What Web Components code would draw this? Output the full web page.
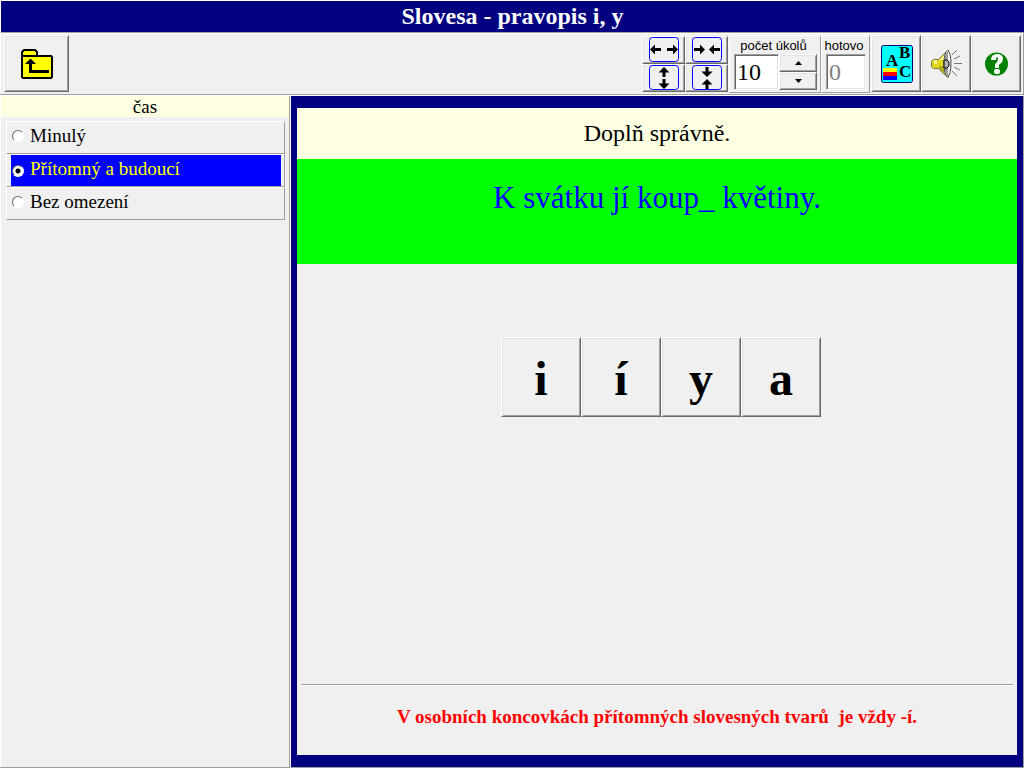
<!DOCTYPE html>
<html lang="cs">
<head>
<meta charset="utf-8">
<title>Slovesa - pravopis i, y</title>
<style>
html, body { height: 100%; margin: 0; }
body { background: #f0f0f0; color: #000; font-family: "Liberation Serif", "Times New Roman", serif; }
</style>
</head>
<body>
<exercise-app></exercise-app>
<script>
const define = (name, html, setup) => {
  const template = document.createElement('template');
  template.innerHTML = '<style>*{box-sizing:border-box}:host{box-sizing:border-box}</style>' + html;
  customElements.define(name, class extends HTMLElement {
    constructor() {
      super();
      this.attachShadow({ mode: 'open' }).append(template.content.cloneNode(true));
    }
    connectedCallback() { if (setup) setup(this, this.shadowRoot); }
  });
};

/* Raised push button with a two-step bevel */
define('bevel-button', `
<style>
:host { display: block; }
button { display: flex; align-items: center; justify-content: center; width: 100%; height: 100%; margin: 0; padding: var(--button-padding, 0);
  background: #f0f0f0; color: inherit; font: inherit; border: 1px solid; border-color: #fff #696969 #696969 #fff;
  box-shadow: inset 1px 1px #e3e3e3, inset -1px -1px #a0a0a0; cursor: default; }
</style>
<button type="button"><slot></slot></button>`, (host, root) => {
  const label = host.getAttribute('label');
  if (label) root.querySelector('button').setAttribute('aria-label', label);
});

define('title-bar', `
<style>
:host { display: block; background: #000080; color: #fff; border: 1px solid #fff; border-width: 1px 0 0 1px; border-bottom: 1px solid #a0a0a0; }
h1 { margin: 0; font-size: 24px; line-height: 31px; text-align: center; font-weight: bold; }
</style>
<h1><slot></slot></h1>`);

define('size-controls', `
<style>
:host { display: grid; grid-template-columns: 43px 43px; grid-template-rows: 28px 28px; --button-padding: 0 0 0 2px; }
bevel-button { min-width: 0; }
svg { display: block; width: 31px; height: 26px; }
rect { fill: none; stroke: #00f; }
</style>
<bevel-button label="Rozšířit"><svg viewBox="0 0 31 26"><rect x=".5" y=".5" width="29" height="24" rx="3"/><path d="M1 12.5l5-5v3.5h6v3H6v3.5zM29 12.5l-5-5V11h-6v3h6v3.5z"/></svg></bevel-button>
<bevel-button label="Zúžit"><svg viewBox="0 0 31 26"><rect x=".5" y=".5" width="29" height="24" rx="3"/><path d="M13 12.5l-5-5V11H2v3h6v3.5zM17 12.5l5-5V11h6v3h-6v3.5z"/></svg></bevel-button>
<bevel-button label="Zvýšit"><svg viewBox="0 0 31 26"><rect x=".5" y=".5" width="29" height="24" rx="3"/><path d="M15 2l5.5 5.5h-4V12h-3V7.500h-4zM15 24l5.500-5.500h-4V14h-3v4.500h-4z"/></svg></bevel-button>
<bevel-button label="Snížit"><svg viewBox="0 0 31 26"><rect x=".5" y=".5" width="29" height="24" rx="3"/><path d="M15 12l5.5-5.5h-4V2h-3v4.500h-4zM15 14l5.500 5.500h-4V24h-3v-4.500h-4z"/></svg></bevel-button>`);

define('task-counter', `
<style>
:host { display: flex; }
.panel { border: 1px solid; border-color: #fff #a0a0a0 #a0a0a0 #fff; height: 58px; padding: 2px 3px 0 4px; }
.tasks { width: 92px; } .done { width: 49px; }
label { display: block; margin-left: -4px; white-space: nowrap; text-align: center; font: 13px/16px "Liberation Sans", Arial, sans-serif; }
.row { display: flex; height: 36px; }
input { appearance: textfield; min-width: 0; flex: 1; height: 36px; margin: 0; padding: 0 0 0 2px; border: 1px solid; border-color: #a0a0a0 #fff #fff #a0a0a0;
  box-shadow: inset 1px 1px #696969, inset -1px -1px #e3e3e3; border-radius: 0; background: #fff; color: #000; font: 24px/32px "Liberation Serif", serif; outline: 0; }
input::-webkit-inner-spin-button { display: none; }
input:disabled { color: #808080; }
.spin { display: grid; grid-template-rows: 18px 18px; width: 38px; }
svg { display: block; width: 7px; height: 4px; }
</style>
<div class="panel tasks"><label for="tasks">počet úkolů</label>
<div class="row"><input id="tasks" type="number" value="10"><div class="spin">
<bevel-button id="up" label="Více"><svg viewBox="0 0 7 4"><path d="M0 4L3.5 0 7 4z"/></svg></bevel-button>
<bevel-button id="down" label="Méně"><svg viewBox="0 0 7 4"><path d="M0 0L3.5 4 7 0z"/></svg></bevel-button>
</div></div></div>
<div class="panel done"><label for="done">hotovo</label><div class="row"><input id="done" value="0" disabled></div></div>`,
(host, root) => {
  const input = root.getElementById('tasks');
  root.getElementById('up').addEventListener('click', () => input.stepUp());
  root.getElementById('down').addEventListener('click', () => input.stepDown());
});

define('tool-bar', `
<style>
:host { display: flex; align-items: flex-start; height: 62px; padding: 2px 2px 0 4px; border: 1px solid #a0a0a0; border-width: 0 1px 1px 0;
  box-shadow: inset 1px 1px #fff; }
.up { width: 65px; height: 57px; margin-right: auto; }
.tools { display: flex; margin-left: 1px; --button-padding: 0 0 0 2px; }
.tools bevel-button { width: 50px; height: 57px; }
size-controls { margin: 1px 1px 0 0; }
svg { display: block; overflow: visible; }
</style>
<bevel-button class="up" label="O úroveň výš"><svg width="32" height="32" viewBox="0 0 32 32">
<path d="M1 8V4l2-2h11l2 2v4h14l1 1v20l-1 1H2l-1-1z" fill="#ff0" stroke="#000" stroke-width="2"/>
<path d="M1 8h16" stroke="#000" stroke-width="2"/>
<path d="M9.5 13v10.5H28" fill="none" stroke="#000" stroke-width="3"/><path d="M4 16l5-5h1l5 5z"/></svg></bevel-button>
<size-controls></size-controls>
<task-counter></task-counter>
<div class="tools">
<bevel-button label="Písmo"><svg width="32" height="38" viewBox="0 0 32 38">
<rect x=".5" y=".5" width="31" height="37" rx="2" fill="#0ff" stroke="#000080"/>
<path d="M2 23h14v4H2z" fill="#ff0"/><path d="M2 27h14v4H2z" fill="red"/><path d="M2 31h14v4H2z" fill="#00f"/>
<g font-family="Liberation Serif, serif" font-weight="bold" font-size="17"><text x="5" y="21">A</text><text x="18" y="13">B</text><text x="18" y="32">C</text></g></svg></bevel-button>
<bevel-button label="Zvuk"><svg width="32" height="30" viewBox="0 0 32 30">
<path d="M2.5 10.5h5l7-7 3-2v27l-3-2-7-7h-5l-2-2v-5z" fill="#e0d818" stroke="#707040"/>
<path d="M3 11h3v4H3zM8 11l6-6v6z" fill="#ffff90"/><path d="M8 17h6v8l-6-6z" fill="#b0a820"/>
<ellipse cx="16.5" cy="14.5" rx="3.5" ry="13" fill="#fff" stroke="#444"/><path d="M14 7q2-5 3-4v24q-1 0-3-5z" fill="#999"/>
<path d="M13 11h3l2 2v4l-2 2h-3z" fill="#b0b0b0" stroke="#000"/>
<path d="M21 6l5-5M23 10l6-3M23 14.5h8M23 18l6 3M21 22l5 5" fill="none" stroke="#777"/></svg></bevel-button>
<bevel-button label="Nápověda"><svg width="24" height="24" viewBox="0 0 24 24">
<circle cx="11.5" cy="12" r="11.5" fill="#008000"/><path d="M6 8q0-6 6-6t6 5q0 3-3 5l-1 1v3h-4v-4q3-2 3-5 0-2-1-2t-1 3z" fill="#fff"/><rect x="9" y="17" width="6" height="5" rx="2" fill="#fff"/></svg></bevel-button>
</div>`);

define('choice-list', `
<style>
:host { display: block; border-right: 1px solid #a0a0a0; border-left: 1px solid #fff; }
fieldset { border: 0; margin: 0; padding: 0; min-width: 0; }
legend { width: 100%; padding: 0; background: #ffffe1; font-size: 19px; line-height: 21px; text-align: center; }
.rows { display: grid; grid-auto-rows: 33px; padding: 4px 4px 0 5px; }
label { display: flex; align-items: center; gap: 6px; padding: 0 3px 3px 4px; border: 1px solid; border-color: #fff #a0a0a0 #a0a0a0 #fff; font-size: 19px; line-height: 24px; }
label:has(:checked) { color: #ff0; background: #00f content-box; padding: 0 3px 0 4px; }
label:has(:checked) span { padding-bottom: 3px; }
input { appearance: none; flex: none; width: 12px; height: 12px; margin: 0 0 0 1px; border: 1px solid; border-color: #696969 #fff #fff #696969; border-radius: 50%; background: #fff; }
input:checked { background: radial-gradient(circle, #000 2px, #fff 3px); }
</style>
<fieldset><legend>čas</legend><div class="rows">
<label><input type="radio" name="tense"><span>Minulý</span></label>
<label><input type="radio" name="tense" checked><span>Přítomný a budoucí</span></label>
<label><input type="radio" name="tense"><span>Bez omezení</span></label>
</div></fieldset>`);

define('exercise-board', `
<style>
:host { display: flex; flex-direction: column; min-width: 0; background: #f0f0f0; border: solid #000080; border-width: 12px 6px; }
h2, p { margin: 0; text-align: center; font-weight: normal; }
h2 { background: #ffffe1; font-size: 24px; line-height: 51px; }
.sentence { background: #0f0; color: #00f; font-size: 31px; line-height: 37px; padding: 20px 0 48px; }
.answers { flex: 1; display: grid; grid-template-columns: repeat(4, 80px); grid-auto-rows: 80px; justify-content: center; padding: 73px 0 32px 8px;
  font-size: 48px; line-height: 56px; font-weight: bold; --button-padding: 4px 0 0; }
.hint { margin: 0 4px; padding: 19px 0 26px; border-top: 1px solid #a0a0a0; box-shadow: inset 0 1px #fff; color: red; font-size: 19px; line-height: 25px; font-weight: bold; white-space: pre-wrap; }
</style>
<h2>Doplň správně.</h2>
<p class="sentence">K svátku jí koup_ květiny.</p>
<div class="answers"><bevel-button>i</bevel-button><bevel-button>í</bevel-button><bevel-button>y</bevel-button><bevel-button>a</bevel-button></div>
<p class="hint">V osobních koncovkách přítomných slovesných tvarů  je vždy -í.</p>`);

define('exercise-app', `
<style>
:host { display: flex; flex-direction: column; min-height: 100vh; background: #f0f0f0; border-bottom: 1px solid #a0a0a0; }
main { flex: 1; display: grid; grid-template-columns: 290px minmax(0, 1fr); border-top: 1px solid #fff; border-right: 1px solid #a0a0a0; }
exercise-board { margin-left: 1px; }
.board { display: grid; background: #fff; }
</style>
<title-bar>Slovesa - pravopis i, y</title-bar>
<tool-bar></tool-bar>
<main><choice-list></choice-list><div class="board"><exercise-board></exercise-board></div></main>`);
</script>
</body>
</html>
